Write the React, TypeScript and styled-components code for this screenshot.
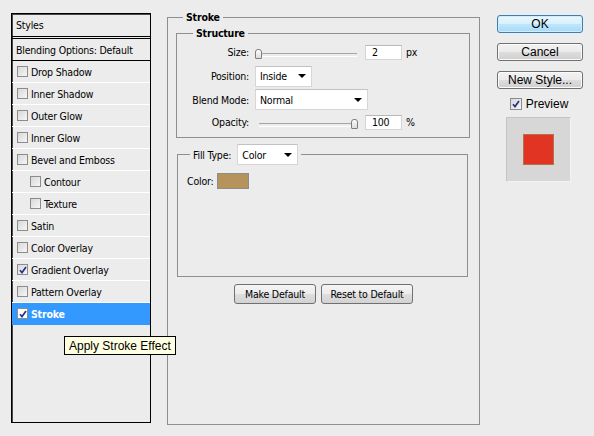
import styled, { createGlobalStyle } from "styled-components";

const GlobalStyle = createGlobalStyle`
  html, body {
    margin: 0;
    padding: 0;
    background: #ececec;
  }
  body {
    font-family: "DejaVu Sans Condensed", "Liberation Sans", sans-serif;
    font-size: 10.5px;
    letter-spacing: -0.2px;
    color: #000;
  }
  * {
    box-sizing: border-box;
  }
`;

const Page = styled.div`
  position: relative;
  width: 594px;
  height: 436px;
  display: flex;
  align-items: flex-start;
  padding: 11px 0 0 11px;
  overflow: hidden;
`;

/* ---------- left list ---------- */

const StylesPanel = styled.div`
  margin-top: 2px;
  width: 140px;
  height: 410px;
  border: 1px solid #000;
  box-shadow: inset 1px 1px 0 #4a4a4a;
  display: flex;
  flex-direction: column;
`;

const PanelHeader = styled.div`
  height: 25px;
  padding-left: 4px;
  display: flex;
  align-items: center;
  border-bottom: 3px double #000;
`;

const BlendRow = styled.div`
  height: 22px;
  padding-left: 4px;
  display: flex;
  align-items: center;
  border-bottom: 1px solid #000;
`;

const EffectRow = styled.div<{ $indent?: boolean; $selected?: boolean }>`
  height: 22px;
  padding-left: ${(p) => (p.$indent ? "18px" : "5px")};
  display: flex;
  align-items: center;
  gap: 3px;
  border-bottom: 1px solid ${(p) => (p.$selected ? "#3399ff" : "#fff")};
  background: ${(p) => (p.$selected ? "#3399ff" : "transparent")};
  color: ${(p) => (p.$selected ? "#fff" : "#000")};
  font-weight: ${(p) => (p.$selected ? "bold" : "normal")};
`;

const Box = styled.span<{ $size?: number; $light?: boolean }>`
  flex: none;
  width: ${(p) => p.$size ?? 11}px;
  height: ${(p) => p.$size ?? 11}px;
  border: 1px solid #8c8c8c;
  background: ${(p) =>
    p.$light ? "#fff" : "linear-gradient(135deg, #d8d8d8, #f6f6f6)"};
  display: inline-flex;
  align-items: center;
  justify-content: center;
`;

const Checkbox = ({
  checked,
  size,
  light,
}: {
  checked?: boolean;
  size?: number;
  light?: boolean;
}) => (
  <Box $size={size} $light={light}>
    {checked && (
      <svg width="8" height="8" viewBox="0 0 8 8">
        <path
          d="M1 4.2 L3 6.6 L7 1"
          fill="none"
          stroke="#25348a"
          strokeWidth="1.7"
        />
      </svg>
    )}
  </Box>
);

/* ---------- group boxes ---------- */

const Group = styled.fieldset<{ $w: number }>`
  margin: 0;
  padding: 0;
  min-width: 0;
  width: ${(p) => p.$w}px;
  border: 1px solid #8e8e8e;
`;

const Legend = styled.legend<{ $inset: number }>`
  margin-left: ${(p) => p.$inset}px;
  padding: 0 3px;
  font-weight: bold;
  line-height: 13px;
`;

const FillLegend = styled.legend`
  margin-left: 12px;
  padding: 0 3px;
  display: flex;
  align-items: center;
  gap: 6px;
`;

const StrokeGroup = styled(Group)`
  margin-left: 16px;
`;

const StrokeBody = styled.div`
  height: 400px;
  display: flex;
  flex-direction: column;
`;

const StructureGroup = styled(Group)`
  margin: 3px 0 0 8px;
`;

const FillGroup = styled(Group)`
  margin: 6px 0 0 9px;
`;

const FieldGrid = styled.div`
  display: grid;
  grid-template-columns: 72px 1fr;
  grid-template-rows: 24px 24px 23px 22px;
  column-gap: 6px;
  align-items: center;
  padding-bottom: 4px;
`;

const FieldLabel = styled.span`
  text-align: right;
`;

const ControlRow = styled.div`
  display: flex;
  align-items: center;
  gap: 4px;
`;

const SliderTrack = styled.div`
  position: relative;
  width: 103px;
  height: 10px;
  margin: 3px 3px 0 0;

  &::before {
    content: "";
    position: absolute;
    left: 4px;
    right: 1px;
    top: 4px;
    height: 2px;
    border-top: 1px solid #a6a6a6;
    border-bottom: 1px solid #fff;
  }
`;

const SliderThumb = styled.span`
  position: absolute;
  top: 0;
  width: 7px;
  height: 10px;
  border: 1px solid #7f7f7f;
  border-radius: 3px 3px 1px 1px;
  background: linear-gradient(#fdfdfd, #dcdcdc);
`;

const Slider = ({ value }: { value: number }) => (
  <SliderTrack>
    <SliderThumb style={{ left: `${(value / 100) * 96}px` }} />
  </SliderTrack>
);

const NumberField = styled.div`
  width: 37px;
  height: 15px;
  padding-left: 6px;
  display: flex;
  align-items: center;
  background: #fff;
  border: 1px solid #d4d4d4;
  border-top-color: #b8b8b8;
`;

const SelectBox = styled.div<{ $w: number }>`
  width: ${(p) => p.$w}px;
  height: 21px;
  padding: 0 5px 0 4px;
  display: flex;
  align-items: center;
  justify-content: space-between;
  background: #fff;
  border: 1px solid #d6d6d6;
  border-top-color: #c2c2c2;
  font-weight: normal;
`;

const Arrow = styled.span`
  width: 0;
  height: 0;
  border-left: 4px solid transparent;
  border-right: 4px solid transparent;
  border-top: 4px solid #000;
`;

const Select = ({ value, width }: { value: string; width: number }) => (
  <SelectBox $w={width}>
    <span>{value}</span>
    <Arrow />
  </SelectBox>
);

const FillBody = styled.div`
  height: 111px;
  padding: 8px 0 0 9px;
`;

const ColorRow = styled.div`
  height: 16px;
  display: flex;
  align-items: center;
  gap: 4px;
`;

const ColorSwatch = styled.span`
  width: 32px;
  height: 16px;
  background: #b5935a;
  border: 1px solid #8d8d8d;
`;

const ButtonRow = styled.div`
  margin-top: 7px;
  display: flex;
  justify-content: center;
  gap: 5px;
`;

const SmallButton = styled.button<{ $w: number }>`
  width: ${(p) => p.$w}px;
  height: 20px;
  padding: 0;
  font: inherit;
  letter-spacing: inherit;
  color: #000;
  border: 1px solid #707070;
  border-radius: 3px;
  background: linear-gradient(#f4f4f4 0%, #ececec 50%, #dedede 51%, #d2d2d2 100%);
`;

/* ---------- right column ---------- */

const SideColumn = styled.div`
  margin: 4px 0 0 17px;
  width: 86px;
  display: flex;
  flex-direction: column;
`;

const PushButton = styled.button<{ $primary?: boolean }>`
  height: 18px;
  margin-bottom: 10px;
  padding: 0;
  font: 12px "Liberation Sans", sans-serif;
  color: #000;
  border: 1px solid ${(p) => (p.$primary ? "#3c7fb1" : "#707070")};
  border-radius: 3px;
  box-shadow: inset 0 0 0 1px ${(p) => (p.$primary ? "#cdeeff" : "#fbfbfb")};
  background: ${(p) =>
    p.$primary
      ? "linear-gradient(#eaf6fd 0%, #d9f0fc 50%, #bee6fd 51%, #a7d9f5 100%)"
      : "linear-gradient(#f2f2f2 0%, #ebebeb 50%, #dddddd 51%, #cfcfcf 100%)"};
`;

const PreviewRow = styled.div`
  margin-top: -2px;
  height: 13px;
  display: flex;
  align-items: center;
  justify-content: center;
  gap: 4px;
  padding-right: 2px;
  font: 12px "Liberation Sans", sans-serif;
  letter-spacing: 0;
`;

const PreviewWell = styled.div`
  margin: 7px 0 0 9px;
  width: 65px;
  height: 65px;
  display: flex;
  align-items: center;
  justify-content: center;
  background: #d7d7d7;
  border: 1px solid #c4c4c4;
  border-right-color: #f2f2f2;
  border-bottom-color: #f2f2f2;
`;

const PreviewSquare = styled.div`
  width: 31px;
  height: 31px;
  background: #e23423;
  border: 1px solid #b86f4d;
`;

const Tooltip = styled.div`
  position: absolute;
  left: 64px;
  top: 336px;
  height: 19px;
  padding: 0 4px;
  display: flex;
  align-items: center;
  background: #ffffe1;
  border: 1px solid #000;
  font: 12px "Liberation Sans", sans-serif;
  letter-spacing: 0;
`;

const effects = [
  { label: "Drop Shadow" },
  { label: "Inner Shadow" },
  { label: "Outer Glow" },
  { label: "Inner Glow" },
  { label: "Bevel and Emboss" },
  { label: "Contour", indent: true },
  { label: "Texture", indent: true },
  { label: "Satin" },
  { label: "Color Overlay" },
  { label: "Gradient Overlay", checked: true },
  { label: "Pattern Overlay" },
  { label: "Stroke", checked: true, selected: true },
];

export default function App() {
  return (
    <>
      <GlobalStyle />
      <Page>
        <StylesPanel>
          <PanelHeader>Styles</PanelHeader>
          <BlendRow>Blending Options: Default</BlendRow>
          {effects.map((e) => (
            <EffectRow key={e.label} $indent={e.indent} $selected={e.selected}>
              <Checkbox checked={e.checked} light={e.selected} />
              {e.label}
            </EffectRow>
          ))}
        </StylesPanel>

        <StrokeGroup $w={313}>
          <Legend $inset={15}>Stroke</Legend>
          <StrokeBody>
            <StructureGroup $w={294}>
              <Legend $inset={16}>Structure</Legend>
              <FieldGrid>
                <FieldLabel>Size:</FieldLabel>
                <ControlRow>
                  <Slider value={0} />
                  <NumberField>2</NumberField>
                  <span>px</span>
                </ControlRow>
                <FieldLabel>Position:</FieldLabel>
                <ControlRow>
                  <Select value="Inside" width={57} />
                </ControlRow>
                <FieldLabel>Blend Mode:</FieldLabel>
                <ControlRow>
                  <Select value="Normal" width={113} />
                </ControlRow>
                <FieldLabel>Opacity:</FieldLabel>
                <ControlRow>
                  <Slider value={100} />
                  <NumberField>100</NumberField>
                  <span>%</span>
                </ControlRow>
              </FieldGrid>
            </StructureGroup>

            <FillGroup $w={291}>
              <FillLegend>
                <span>Fill Type:</span>
                <Select value="Color" width={61} />
              </FillLegend>
              <FillBody>
                <ColorRow>
                  <span>Color:</span>
                  <ColorSwatch />
                </ColorRow>
              </FillBody>
            </FillGroup>

            <ButtonRow>
              <SmallButton $w={82}>Make Default</SmallButton>
              <SmallButton $w={92}>Reset to Default</SmallButton>
            </ButtonRow>
          </StrokeBody>
        </StrokeGroup>

        <SideColumn>
          <PushButton $primary>OK</PushButton>
          <PushButton>Cancel</PushButton>
          <PushButton>New Style...</PushButton>
          <PreviewRow>
            <Checkbox checked size={12} />
            Preview
          </PreviewRow>
          <PreviewWell>
            <PreviewSquare />
          </PreviewWell>
        </SideColumn>

        <Tooltip>Apply Stroke Effect</Tooltip>
      </Page>
    </>
  );
}
